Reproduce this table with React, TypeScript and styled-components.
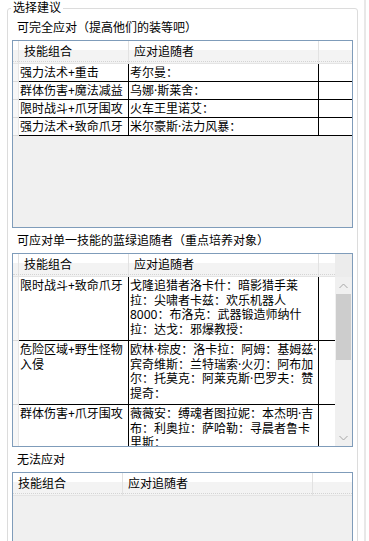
import React from 'react'
import styled, { createGlobalStyle } from 'styled-components'

const GlobalStyle = createGlobalStyle`
  html, body {
    margin: 0;
    padding: 0;
    background: #fff;
  }
  body {
    font-family: "Noto Sans", "Noto Sans CJK SC", "Microsoft YaHei", sans-serif;
    font-size: 12px;
    color: #000;
  }
`

const Frame = styled.div`
  width: 369px;
  height: 541px;
  overflow: hidden;
  display: flex;
  background: #fff;
`

const GroupBox = styled.fieldset`
  margin: 0 0 0 7px;
  padding: 0;
  width: 351px;
  min-width: 0;
  height: 600px;
  flex: none;
  box-sizing: border-box;
  border: 1px solid #dcdcdc;
  border-radius: 3px;
`

const Legend = styled.legend`
  margin-left: 3px;
  padding: 0 2px;
  line-height: 16px;
  font-size: 12px;
`

const RightRail = styled.div`
  margin-left: 6px;
  width: 2px;
  flex: none;
  background: #e8e8e8;
`

const Caption = styled.div`
  height: 24px;
  line-height: 24px;
  padding-left: 9px;
  white-space: nowrap;
`

const Grid = styled.div<{ $height: number }>`
  margin: 0 4px 1px 4px;
  height: ${p => p.$height}px;
  box-sizing: border-box;
  border: 1px solid #7f9cba;
  background: #f0f0f0;
  display: flex;
  overflow: hidden;
`

const Table = styled.div`
  flex: 1;
  min-width: 0;
  display: flex;
  flex-direction: column;
  overflow: hidden;
`

const HeaderRow = styled.div`
  position: relative;
  display: flex;
  flex: none;
  height: 23px;
  box-sizing: border-box;
  background: linear-gradient(#fff 0 9px, #f3f3f3 9px);
  border-bottom: 1px solid #e4e4e4;

  &::after {
    content: '';
    position: absolute;
    left: 0;
    right: 0;
    bottom: 1px;
    border-top: 1px dotted #d4d4d4;
  }
`

const HeaderCell = styled.div<{ $w?: number }>`
  ${p => (p.$w ? `width: ${p.$w}px; flex: none;` : 'flex: 1;')}
  box-sizing: border-box;
  padding-left: 5px;
  line-height: 22px;
  white-space: nowrap;
  overflow: hidden;
  border-right: ${p => (p.$w ? '1px solid #e2e2e2' : 'none')};
`

const Row = styled.div`
  display: flex;
  flex: none;
`

const RowHeader = styled.div`
  width: 6px;
  flex: none;
  box-sizing: border-box;
  background: #f7f7f7;
  border-right: 1px solid #e6e6e6;
  border-bottom: 1px solid #dadada;
`

const Cell = styled.div<{ $w?: number; $wrap?: boolean }>`
  ${p => (p.$w ? `width: ${p.$w}px; flex: none;` : 'flex: 1;')}
  box-sizing: border-box;
  background: #fff;
  border-bottom: 1px solid #000;
  border-right: ${p => (p.$w ? '1px solid #000' : 'none')};
  white-space: pre;
  overflow: hidden;
  ${p =>
    p.$wrap
      ? 'padding: 2px 1px 3px; line-height: 14.5px;'
      : 'padding: 0 1px; height: 18px; line-height: 17px;'}
`

const VScroll = styled.div`
  width: 17px;
  flex: none;
  display: flex;
  flex-direction: column;
  background: #f0f0f0;
`

const ScrollCorner = styled.div`
  height: 23px;
  flex: none;
  background: #ececec;
`

const ScrollButton = styled.div`
  height: 17px;
  flex: none;
  display: flex;
  align-items: center;
  justify-content: center;
`

const ScrollTrack = styled.div`
  flex: 1;
  display: flex;
  flex-direction: column;
`

const ScrollThumb = styled.div`
  height: 66px;
  margin: 0 1px;
  background: #cdcdcd;
`

const Chevron: React.FC<{ down?: boolean }> = ({ down }) => (
  <svg width="9" height="6" viewBox="0 0 9 6">
    <path
      d={down ? 'M0.5 1 L4.5 5 L8.5 1' : 'M0.5 5 L4.5 1 L8.5 5'}
      fill="none"
      stroke="#a6a6a6"
      strokeWidth="1"
    />
  </svg>
)

type Match = { combo: string; followers: string }

const fullCounters: Match[] = [
  { combo: '强力法术+重击', followers: '考尔曼：' },
  { combo: '群体伤害+魔法减益', followers: '乌娜·斯莱舍：' },
  { combo: '限时战斗+爪牙围攻', followers: '火车王里诺艾：' },
  { combo: '强力法术+致命爪牙', followers: '米尔豪斯·法力风暴：' },
]

const singleCounters: Match[] = [
  {
    combo: '限时战斗+致命爪牙',
    followers: '戈隆追猎者洛卡什：暗影猎手莱\n拉：尖啸者卡兹：欢乐机器人\n8000：布洛克：武器锻造师纳什\n拉：达戈：邪爆教授：',
  },
  {
    combo: '危险区域+野生怪物\n入侵',
    followers: '欧林·棕皮：洛卡拉：阿姆：基姆兹·\n宾奇维斯：兰特瑞索·火刃：阿布加\n尔：托莫克：阿莱克斯·巴罗夫：赞\n提奇：',
  },
  {
    combo: '群体伤害+爪牙围攻',
    followers: '薇薇安：缚魂者图拉妮：本杰明·吉\n布：利奥拉：萨哈勒：寻晨者鲁卡\n里斯：',
  },
]

const FollowerGrid: React.FC<{
  height: number
  rows: Match[]
  rowHeaders?: boolean
  wrap?: boolean
  scroll?: boolean
}> = ({ height, rows, rowHeaders, wrap, scroll }) => (
  <Grid $height={height}>
    <Table>
      <HeaderRow>
        {rowHeaders && <HeaderCell $w={6} />}
        <HeaderCell $w={110}>技能组合</HeaderCell>
        <HeaderCell $w={190}>应对追随者</HeaderCell>
        <HeaderCell />
      </HeaderRow>
      {rows.map(r => (
        <Row key={r.combo}>
          {rowHeaders && <RowHeader />}
          <Cell $w={110} $wrap={wrap}>{r.combo}</Cell>
          <Cell $w={190} $wrap={wrap}>{r.followers}</Cell>
          <Cell $wrap={wrap} />
        </Row>
      ))}
    </Table>
    {scroll && (
      <VScroll>
        <ScrollCorner />
        <ScrollButton><Chevron /></ScrollButton>
        <ScrollTrack>
          <ScrollThumb />
        </ScrollTrack>
        <ScrollButton><Chevron down /></ScrollButton>
      </VScroll>
    )}
  </Grid>
)

const App: React.FC = () => (
  <Frame>
    <GlobalStyle />
    <GroupBox>
      <Legend>选择建议</Legend>
      <Caption>可完全应对（提高他们的装等吧）</Caption>
      <FollowerGrid height={188} rows={fullCounters} rowHeaders />
      <Caption>可应对单一技能的蓝绿追随者（重点培养对象）</Caption>
      <FollowerGrid height={194} rows={singleCounters} rowHeaders wrap scroll />
      <Caption>无法应对</Caption>
      <FollowerGrid height={100} rows={[]} />
    </GroupBox>
    <RightRail />
  </Frame>
)

export default App
